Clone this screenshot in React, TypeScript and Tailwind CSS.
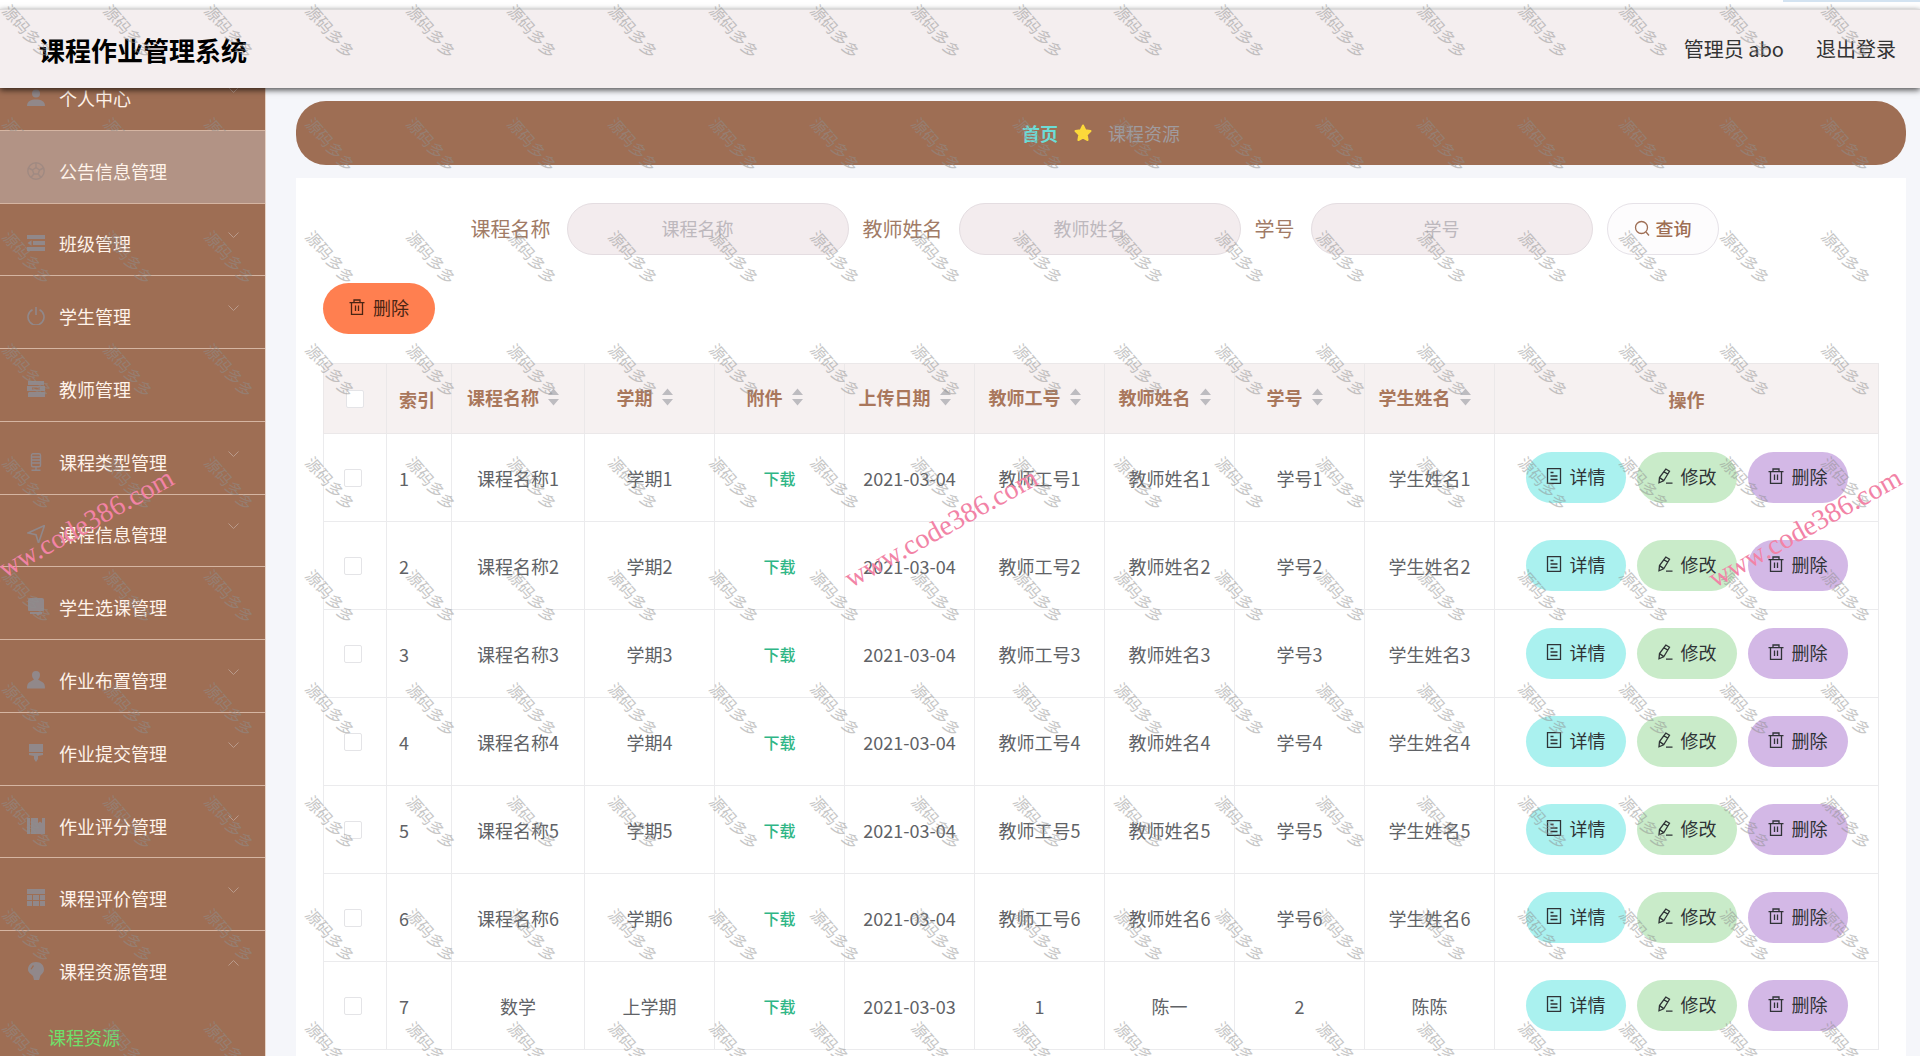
import { ReactNode } from 'react';
import { clsx } from 'clsx';

type MenuItem = {
    label: string;
    icon: ReactNode;
    active?: boolean;
    arrow?: 'down' | 'up';
};

type Row = {
    course: string;
    term: string;
    date: string;
    teacherNo: string;
    teacher: string;
    studentNo: string;
    student: string;
};

const userIcon = (
    <>
        <circle cx="9" cy="4.500" r="4" />
        <path d="M0 17c0-5 4-6.500 9-6.500s9 1.500 9 6.500z" />
    </>
);

const menu: MenuItem[] = [
    { label: '个人中心', arrow: 'down', icon: userIcon },
    {
        label: '公告信息管理',
        active: true,
        icon: (
            <g fill="none" stroke="currentColor" strokeWidth="1.400">
                <circle cx="9" cy="9" r="8.200" />
                <path d="M9 5.500l3.500 2.500-1.300 4H6.800L5.500 8zM9 1v4.500M12.500 8l4-2M11.200 12l2.800 3.500M6.800 12L4 15.500M5.500 8l-4-2" />
            </g>
        ),
    },
    {
        label: '班级管理',
        arrow: 'down',
        icon: <path d="M0 1h18v4H0zM6 7h12v4H6zM0 13h18v4H0zM4.500 6.200v5.600L0.500 9z" />,
    },
    {
        label: '学生管理',
        arrow: 'down',
        icon: (
            <g fill="none" stroke="currentColor" strokeWidth="1.600">
                <path d="M5.500 2.800a8 8 0 1 0 7 0M9 0v8" />
            </g>
        ),
    },
    {
        label: '教师管理',
        icon: <path d="M1 1h16v4H1zM0 6h18v5H0zM2 12h16v5H1v-4zM5 7.500v2h8v-2z" fillRule="evenodd" />,
    },
    {
        label: '课程类型管理',
        arrow: 'down',
        icon: (
            <g fill="none" stroke="currentColor" strokeWidth="1.400">
                <rect x="4.500" y="0.700" width="9" height="13" rx="1.500" />
                <path d="M5 4h8M5 7h8M5 10h8M9 14v3M4.500 17.300h9" />
            </g>
        ),
    },
    {
        label: '课程信息管理',
        arrow: 'down',
        icon: <path d="M17.500 0.500L1 8l8 1.800L11.500 18z" fill="none" stroke="currentColor" strokeWidth="1.600" />,
    },
    {
        label: '学生选课管理',
        icon: <path d="M3 0h12a2 2 0 0 1 2 2v10a1 1 0 0 1-1 1H2a1 1 0 0 1-1-1V2a2 2 0 0 1 2-2zM3 14h12v2h-2l-2 2-2-2H3z" />,
    },
    {
        label: '作业布置管理',
        arrow: 'down',
        icon: <path d="M9 0a4 4 0 0 1 4 4c0 2-1 3.500-2 4.500l5 3c1.500 1 2 3 2 6H0c0-3 .5-5 2-6l5-3C6 7.500 5 6 5 4a4 4 0 0 1 4-4z" />,
    },
    {
        label: '作业提交管理',
        arrow: 'down',
        icon: <path d="M2 0h14v8H2zM2 9h14v2l-5 1v3l-2 3-2-3v-3l-5-1z" />,
    },
    {
        label: '作业评分管理',
        arrow: 'down',
        icon: <path d="M0 1h3v16H0zM4 1h7v5l2-1.500L15 6V1h3v16H4z" />,
    },
    {
        label: '课程评价管理',
        arrow: 'down',
        icon: <path d="M0 0h18v5H0zM0 6h5v5H0zM6 6h6v5H6zM13 6h5v5h-5zM0 12h5v5H0zM6 12h6v5H6zM13 12h5v5h-5z" />,
    },
    {
        label: '课程资源管理',
        arrow: 'up',
        icon: <path d="M9 0c5 0 8 3.500 8 7.500 0 3-2 4-3.500 6L12 18H7l-1-4C4 12 1 10.500 1 7.500 1 3.500 4 0 9 0zM6 3L3.500 7l1 .5L7 4z" />,
    },
];

const columns = ['课程名称', '学期', '附件', '上传日期', '教师工号', '教师姓名', '学号', '学生姓名'];

const rows: Row[] = [
    ...[1, 2, 3, 4, 5, 6].map((n) => ({
        course: `课程名称${n}`,
        term: `学期${n}`,
        date: '2021-03-04',
        teacherNo: `教师工号${n}`,
        teacher: `教师姓名${n}`,
        studentNo: `学号${n}`,
        student: `学生姓名${n}`,
    })),
    {
        course: '数学',
        term: '上学期',
        date: '2021-03-03',
        teacherNo: '1',
        teacher: '陈一',
        studentNo: '2',
        student: '陈陈',
    },
];

const filters = [
    { id: 'course', label: '课程名称' },
    { id: 'teacher', label: '教师姓名' },
    { id: 'number', label: '学号' },
];

function LineIcon({ children }: { children: ReactNode }) {
    return (
        <svg className="h-4 w-4 shrink-0" viewBox="0 0 16 16" fill="none" stroke="currentColor" strokeWidth="1.300">
            {children}
        </svg>
    );
}

const TrashIcon = () => (
    <LineIcon>
        <path d="M0.500 3.700h15M2.500 3.700v11.600h11V3.700M5 3.500V1h6v2.500M6.500 6.500v5.500M9.500 6.500v5.500" />
    </LineIcon>
);

const DetailIcon = () => (
    <LineIcon>
        <path d="M1.500 0.700h13v14.600h-13zM4.500 4.500h3M4.500 8h7M4.500 11.500h7" />
    </LineIcon>
);

const EditIcon = () => (
    <LineIcon>
        <path d="M8.800 1l3.700 2.300-5.800 9.500-4.700 2 .5-5.200zM7 3.800l3.700 2.300M2.500 9.600l4 2.800M9 15.200h6.500" />
    </LineIcon>
);

function Checkbox({ label }: { label: string }) {
    return (
        <input
            type="checkbox"
            aria-label={label}
            className="block h-[18px] w-[18px] appearance-none rounded-xs border border-[#e4e4e7] bg-white"
        />
    );
}

function Sidebar() {
    return (
        <nav className="w-[266px] shrink-0 overflow-hidden border-r border-[#e5d3c8] bg-[#9e6e54]">
            <ul className="-mt-[30px] flex h-[945px] flex-col">
                {menu.map((item) => (
                    <li
                        key={item.label}
                        className={clsx(
                            'flex-1',
                            item.arrow !== 'up' && 'border-b border-[#d5b5a2]',
                            item.active && 'relative z-40 bg-[#b29385]',
                        )}
                    >
                        <a href="#" className="flex h-full items-center pt-2 pr-[26px] pl-[27px] text-lg text-[#fff3ea]">
                            <svg
                                className={clsx('mr-[14px] h-[18px] w-[18px]', item.active ? 'text-[#a08a82]' : 'text-[#91888a]')}
                                viewBox="0 0 18 18"
                                fill="currentColor"
                            >
                                {item.icon}
                            </svg>
                            {item.label}
                            {item.arrow && (
                                <svg
                                    className={clsx('mb-4 ml-auto h-[6px] w-[11px] text-[#b99a8b]', item.arrow === 'up' && 'rotate-180')}
                                    viewBox="0 0 11 6"
                                    fill="none"
                                    stroke="currentColor"
                                >
                                    <path d="M0.500 0.500l5 5 5-5" />
                                </svg>
                            )}
                        </a>
                    </li>
                ))}
            </ul>
            <a href="#" className="block pt-4 pl-12 text-lg leading-9 text-[#6fe06a]">
                课程资源
            </a>
        </nav>
    );
}

function SearchBar() {
    return (
        <form className="flex items-center justify-center gap-[14px] pr-[13px]">
            {filters.map((f) => (
                <div key={f.id} className="flex items-center gap-4">
                    <label htmlFor={f.id} className="text-xl text-[#a17b66]">
                        {f.label}
                    </label>
                    <input
                        id={f.id}
                        placeholder={f.label}
                        className="h-[52px] w-[282px] rounded-full border border-[#e4dde1] bg-[#f3ecee] pr-9 pb-[2px] pl-4 text-center text-lg outline-none placeholder:text-[#bdb8bd]"
                    />
                </div>
            ))}
            <button
                type="button"
                className="flex h-[52px] w-[112px] items-center justify-center gap-[6px] rounded-full border border-[#e6e2e8] bg-[#fdfcfd] pb-[2px] text-lg font-medium text-[#9e6e54]"
            >
                <LineIcon>
                    <circle cx="7.500" cy="7.500" r="6" />
                    <path d="M12 12l3 3.500" />
                </LineIcon>
                查询
            </button>
        </form>
    );
}

function ActionButton({ icon, label, color }: { icon: ReactNode; label: string; color: string }) {
    return (
        <button
            type="button"
            className={clsx('flex h-[51px] w-[100px] items-center justify-center gap-2 rounded-full pb-[3px] text-lg text-[#2f3336]', color)}
        >
            {icon}
            {label}
        </button>
    );
}

function CourseTable() {
    return (
        <table className="mt-[29px] w-full table-fixed border-collapse border border-[#ebebed] text-lg text-[#606266]">
            <colgroup>
                <col className="w-[63px]" />
                <col className="w-[65px]" />
                <col className="w-[133px]" />
                <col span={7} className="w-[130px]" />
                <col />
            </colgroup>
            <thead>
                <tr className="h-[70px] bg-[#f6f1f1] text-[#a9775c] [&>th]:border [&>th]:border-[#ebe8e9]">
                    <th className="pl-[22px]">
                        <Checkbox label="全选" />
                    </th>
                    <th className="pl-3 text-left">索引</th>
                    {columns.map((name) => (
                        <th key={name}>
                            <button type="button" className="mx-auto mb-1 flex items-center font-bold">
                                {name}
                                <svg className="mr-[10px] ml-[9px] h-[18px] w-[11px]" viewBox="0 0 11 18" fill="#bdbcc0">
                                    <path d="M5.500 0.500L11 7H0zM5.500 17.500L0 11h11z" />
                                </svg>
                            </button>
                        </th>
                    ))}
                    <th>操作</th>
                </tr>
            </thead>
            <tbody>
                {rows.map((row, i) => (
                    <tr key={row.course} className="h-[88px] text-center [&>td]:border [&>td]:border-[#ebebed]">
                        <td className="pl-5">
                            <Checkbox label={`选择${row.course}`} />
                        </td>
                        <td className="pl-3 text-left">{i + 1}</td>
                        <td>{row.course}</td>
                        <td>{row.term}</td>
                        <td>
                            <button type="button" className="pb-[3px] text-base font-medium text-[#2fb686]">
                                下载
                            </button>
                        </td>
                        <td>{row.date}</td>
                        <td>{row.teacherNo}</td>
                        <td>{row.teacher}</td>
                        <td>{row.studentNo}</td>
                        <td>{row.student}</td>
                        <td>
                            <div className="flex justify-center gap-[11px]">
                                <ActionButton icon={<DetailIcon />} label="详情" color="bg-[#aaf1ef]" />
                                <ActionButton icon={<EditIcon />} label="修改" color="bg-[#c9ebc9]" />
                                <ActionButton icon={<TrashIcon />} label="删除" color="bg-[#d3b8e6]" />
                            </div>
                        </td>
                    </tr>
                ))}
            </tbody>
        </table>
    );
}

function Watermarks() {
    return (
        <div aria-hidden="true" className="pointer-events-none absolute inset-0 z-30 overflow-hidden select-none">
            <div className="grid auto-rows-[113px] grid-cols-19">
                {Array.from({ length: 190 }, (_, i) => (
                    <div key={i} className="pl-[14px]">
                        <span className="block w-16 origin-top-left rotate-[49deg] text-base leading-5 whitespace-nowrap text-[#8f8f8f] opacity-50">
                            源码多多
                        </span>
                    </div>
                ))}
            </div>
            {['left-[4%]', 'left-[49%]', 'left-[94%]'].map((left) => (
                <span
                    key={left}
                    className={clsx(
                        "absolute top-1/2 -translate-x-1/2 -translate-y-1/2 -rotate-[29deg] font-['Liberation_Serif',serif] text-[28px] text-[#f283a6]",
                        left,
                    )}
                >
                    www.code386.com
                </span>
            ))}
        </div>
    );
}

export default function App() {
    return (
        <div className="relative flex h-screen flex-col overflow-hidden bg-[#f5f6fa] font-['Noto_Sans_CJK_SC',sans-serif]">
            <div className="flex h-[9px] shrink-0 justify-end bg-white">
                <div className="h-[2px] w-[137px] bg-[#d3e3f1]" />
            </div>
            <header className="relative z-20 flex h-[79px] shrink-0 items-center justify-between border-t border-[#dcdada] bg-[#f4eeef] pr-6 pl-[39px] shadow-[0_2px_6px_rgba(0,0,0,0.7)]">
                <h1 className="text-[26px] font-bold text-black">课程作业管理系统</h1>
                <div className="flex gap-8 text-xl text-[#333]">
                    <span>管理员 abo</span>
                    <a href="#">退出登录</a>
                </div>
            </header>

            <div className="flex min-h-0 flex-1">
                <Sidebar />
                <main className="flex min-w-0 flex-1 flex-col overflow-hidden pt-[13px] pr-[14px] pl-[30px]">
                    <div className="flex h-16 shrink-0 items-center justify-center rounded-[30px] bg-[#9e6e54] text-lg">
                        <a href="#" className="font-bold text-[#6cdcd6]">
                            首页
                        </a>
                        <svg className="mx-4 h-[18px] w-[18px]" viewBox="0 0 18 18" fill="#fcd93a" stroke="#fcd93a" strokeWidth="2" strokeLinejoin="round">
                            <path d="M9 1.500l2.300 4.800 5.200.7-3.800 3.700.9 5.300L9 13.500 4.400 16l.9-5.300L1.500 7l5.200-.7z" />
                        </svg>
                        <span className="text-[#a09b9e]">课程资源</span>
                    </div>

                    <section className="mt-[13px] flex-1 bg-white px-[27px] pt-[25px]">
                        <SearchBar />
                        <button
                            type="button"
                            className="mt-7 flex h-[51px] w-[112px] items-center justify-center gap-2 rounded-full bg-[#ff7f50] pb-[3px] text-lg text-[#4a2413]"
                        >
                            <TrashIcon />
                            删除
                        </button>
                        <CourseTable />
                    </section>
                </main>
            </div>

            <Watermarks />
        </div>
    );
}
